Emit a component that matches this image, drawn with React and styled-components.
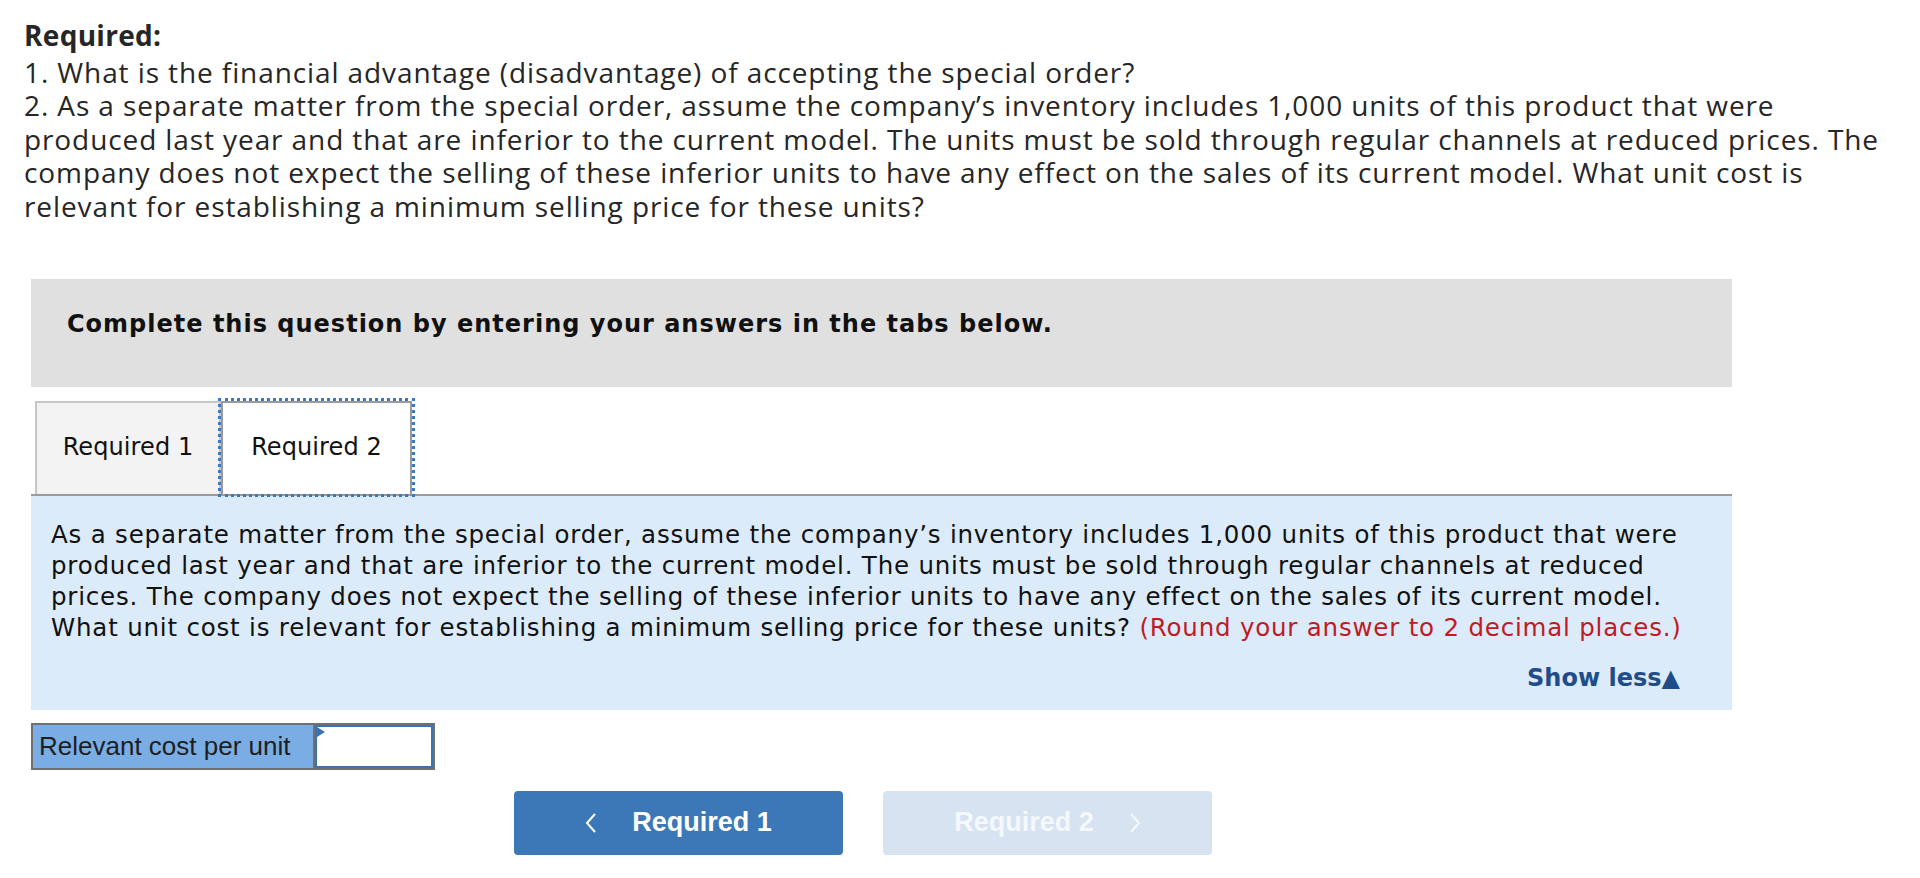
import React from "react";
import styled, { createGlobalStyle } from "styled-components";

const GlobalStyle = createGlobalStyle`
  html, body {
    margin: 0;
    padding: 0;
    background: #ffffff;
  }
  body {
    font-family: "Open Sans", sans-serif;
  }
`;

const verdana = `"DejaVu Sans", Verdana, sans-serif`;
const arial = `"Liberation Sans", Arial, sans-serif`;

const Page = styled.div`
  padding: 19px 0 0 24px;
  width: 1880px;
`;

const Intro = styled.div`
  font-family: "Open Sans", sans-serif;
  font-size: 28px;
  letter-spacing: 0.9px;
  line-height: 33.6px;
  color: #262626;
`;

const IntroTitle = styled.div`
  font-weight: 700;
  letter-spacing: 0.3px;
  margin-bottom: 3px;
`;

const Question = styled.section`
  margin: 55px 0 0 7px;
  width: 1701px;
`;

const Banner = styled.div`
  box-sizing: border-box;
  height: 108px;
  padding: 30px 0 0 36px;
  background: #e0e0e0;
  font-family: ${verdana};
  font-weight: 700;
  font-size: 24px;
  letter-spacing: 1px;
  line-height: 30px;
  color: #111;
`;

const TabBar = styled.div`
  display: flex;
  margin-top: 14px;
  padding-left: 4px;
  border-bottom: 2px solid #9b9b9b;
`;

const Tab = styled.button`
  box-sizing: border-box;
  width: ${(p) => (p.$active ? 191 : 186)}px;
  height: 93px;
  display: flex;
  align-items: center;
  justify-content: center;
  margin: 0;
  padding: 0 0 2px;
  border: 2px solid ${(p) => (p.$active ? "#9a9a9a" : "#c6c6c6")};
  border-bottom: none;
  background: ${(p) => (p.$active ? "#ffffff" : "#f3f3f3")};
  outline: ${(p) => (p.$active ? "3px dotted #3a77c4" : "none")};
  outline-offset: 0;
  font-family: ${verdana};
  font-size: 24px;
  letter-spacing: 0.1px;
  color: #111;
  cursor: pointer;
`;

const Panel = styled.div`
  padding: 23px 16px 16px 20px;
  background: #dcebf9;
  font-family: ${verdana};
  font-size: 24.5px;
  letter-spacing: 0.8px;
  line-height: 31px;
  color: #111;
`;

const Hint = styled.span`
  color: #c01a24;
`;

const ShowLess = styled.div`
  margin: 20px 36px 0 0;
  text-align: right;
  font-weight: 700;
  font-size: 24px;
  letter-spacing: 0;
  color: #1f4d8a;
  cursor: pointer;
`;

const AnswerRow = styled.div`
  display: inline-flex;
  margin-top: 13px;
  border: 2px solid #707070;
  height: 47px;
  box-sizing: border-box;
`;

const Label = styled.div`
  box-sizing: border-box;
  width: 282px;
  display: flex;
  align-items: center;
  padding-left: 6px;
  background: #7aade3;
  border-right: 2px solid #707070;
  font-family: ${arial};
  font-size: 26px;
  color: #1e1e1e;
`;

const InputWrap = styled.div`
  position: relative;
  width: 118px;
`;

const Input = styled.input`
  box-sizing: border-box;
  width: 100%;
  height: 100%;
  margin: 0;
  border: 2px solid #3d72b0;
  background: #fff;
  font-family: ${arial};
  font-size: 22px;
  text-align: right;
  outline: none;
`;

const Flag = styled.span`
  position: absolute;
  top: 2px;
  left: 2px;
  width: 0;
  height: 0;
  border-top: 5px solid transparent;
  border-bottom: 5px solid transparent;
  border-left: 8px solid #3d72b0;
`;

const Nav = styled.div`
  display: flex;
  gap: 40px;
  margin-top: 21px;
  padding-left: 490px;
`;

const NavButton = styled.button`
  box-sizing: border-box;
  width: 329px;
  height: 64px;
  display: flex;
  align-items: center;
  justify-content: center;
  gap: 35px;
  margin: 0;
  border: none;
  border-radius: 4px;
  background: ${(p) => (p.$disabled ? "#d7e3f1" : "#3c78b8")};
  color: ${(p) => (p.$disabled ? "#f5f8fc" : "#ffffff")};
  font-family: ${arial};
  font-weight: 700;
  font-size: 27px;
  cursor: ${(p) => (p.$disabled ? "default" : "pointer")};
`;

const Chevron = ({ dir }) => (
  <svg width="12" height="20" viewBox="0 0 12 20" aria-hidden="true">
    <polyline
      points={dir === "left" ? "10,1 2,10 10,19" : "2,1 10,10 2,19"}
      fill="none"
      stroke="currentColor"
      strokeWidth="2"
    />
  </svg>
);

export default function App() {
  return (
    <>
      <GlobalStyle />
      <Page>
        <Intro>
          <IntroTitle>Required:</IntroTitle>
          1. What is the financial advantage (disadvantage) of accepting the special order?
          <br />
          2. As a separate matter from the special order, assume the company’s inventory includes 1,000 units of this product that were
          <br />
          produced last year and that are inferior to the current model. The units must be sold through regular channels at reduced prices. The
          <br />
          company does not expect the selling of these inferior units to have any effect on the sales of its current model. What unit cost is
          <br />
          relevant for establishing a minimum selling price for these units?
        </Intro>

        <Question>
          <Banner>Complete this question by entering your answers in the tabs below.</Banner>

          <TabBar>
            <Tab>Required 1</Tab>
            <Tab $active>Required 2</Tab>
          </TabBar>

          <Panel>
            As a separate matter from the special order, assume the company’s inventory includes 1,000 units of this product that were
            <br />
            produced last year and that are inferior to the current model. The units must be sold through regular channels at reduced
            <br />
            prices. The company does not expect the selling of these inferior units to have any effect on the sales of its current model.
            <br />
            What unit cost is relevant for establishing a minimum selling price for these units?{" "}
            <Hint>(Round your answer to 2 decimal places.)</Hint>
            <ShowLess>Show less▲</ShowLess>
          </Panel>

          <AnswerRow>
            <Label>Relevant cost per unit</Label>
            <InputWrap>
              <Input type="text" aria-label="Relevant cost per unit" />
              <Flag />
            </InputWrap>
          </AnswerRow>
        </Question>

        <Nav>
          <NavButton>
            <Chevron dir="left" />
            <span>Required 1</span>
          </NavButton>
          <NavButton $disabled>
            <span>Required 2</span>
            <Chevron dir="right" />
          </NavButton>
        </Nav>
      </Page>
    </>
  );
}
